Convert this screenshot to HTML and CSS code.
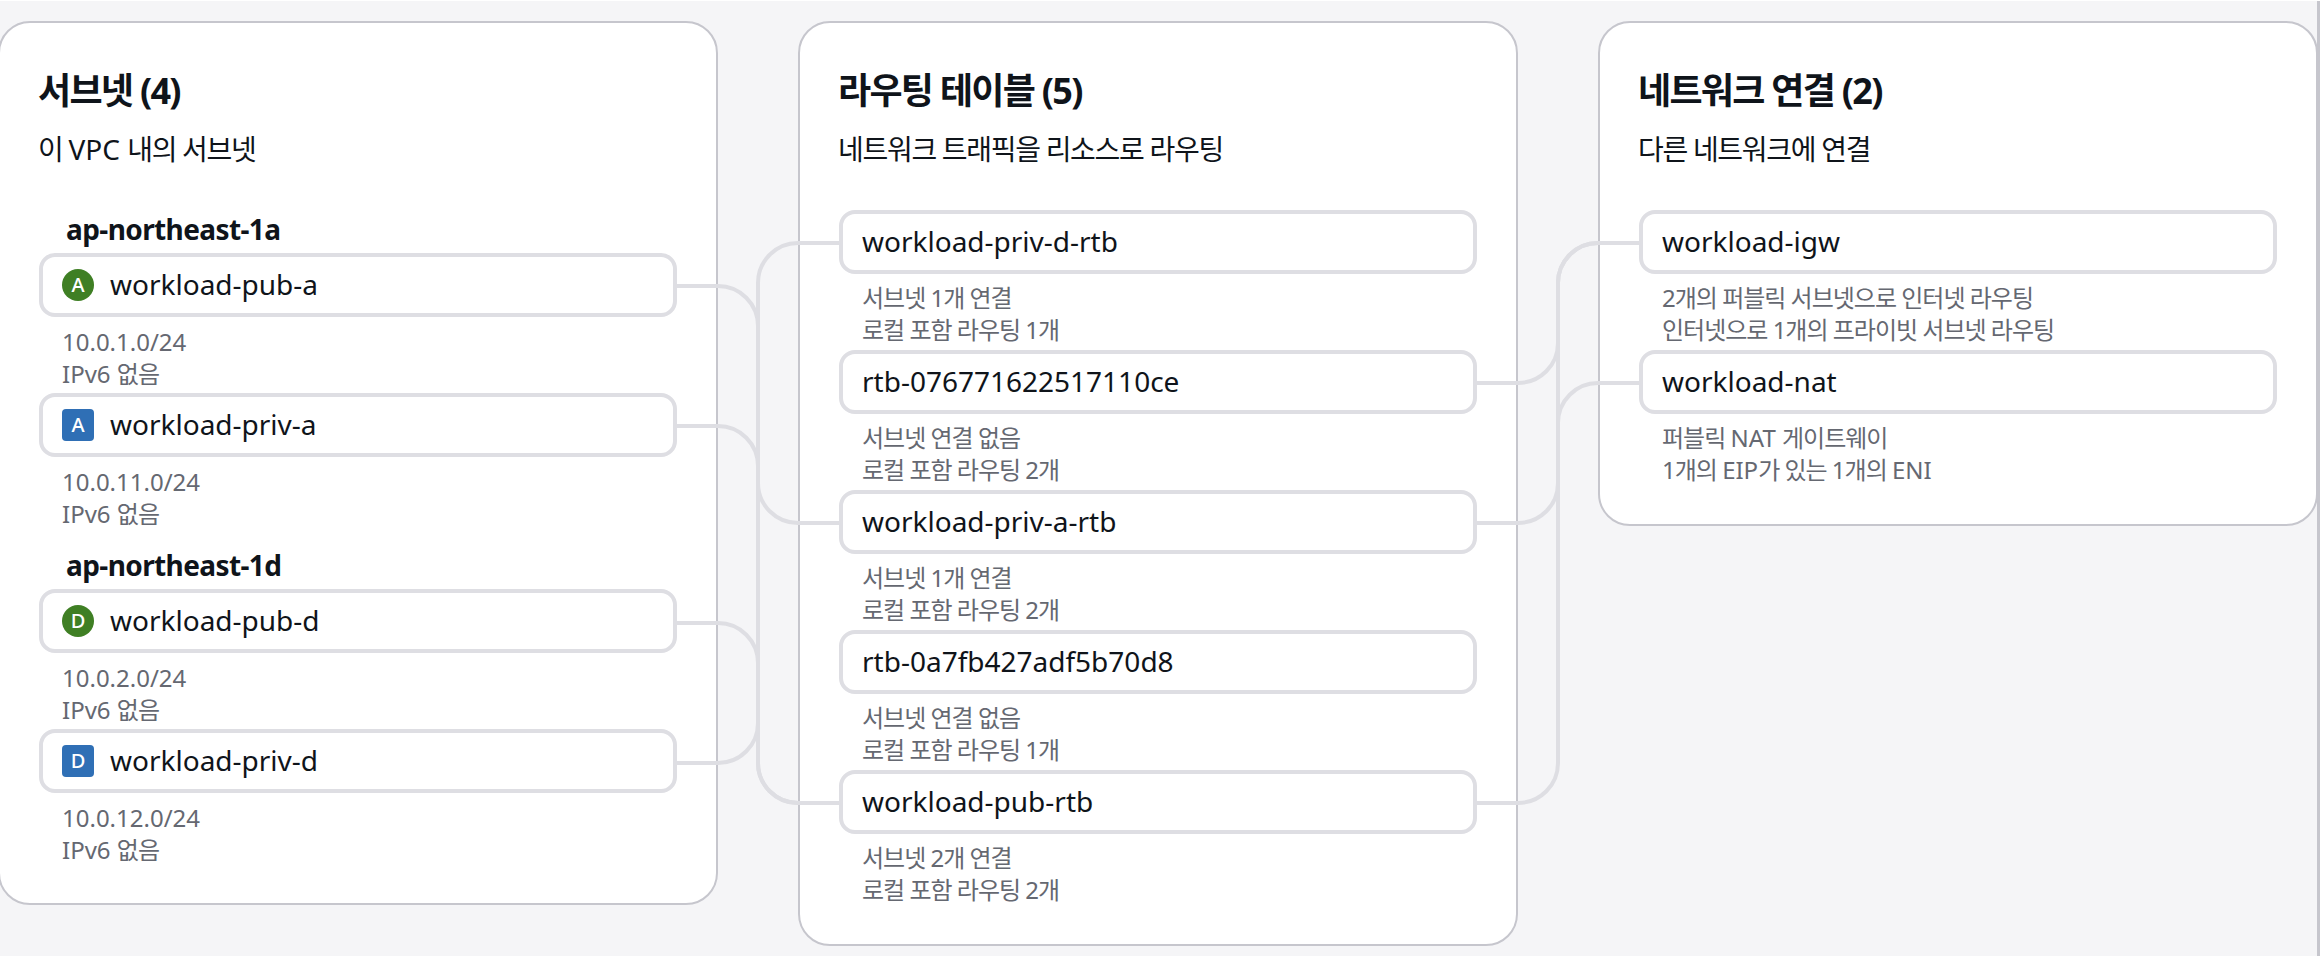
FILE: index.html
```html
<!DOCTYPE html>
<html lang="ko">
<head>
<meta charset="utf-8">
<title>VPC 리소스 맵</title>
<link rel="stylesheet" href="styles.css">
</head>
<body>
<main class="board">
  <div class="columns">
    <section class="card">
      <h2 class="title">서브넷 (4)</h2>
      <p class="sub"><span class="ko">이 </span>VPC <span class="ko">내의 서브넷</span></p>
      <div class="list">
        <h3 class="zone">ap-northeast-1a</h3>
        <div class="node"><span class="badge badge-pub">A</span><span>workload-pub-a</span></div>
        <div class="meta">10.0.1.0/24<br>IPv6 <span class="ko">없음</span></div>
        <div class="node"><span class="badge badge-priv">A</span><span>workload-priv-a</span></div>
        <div class="meta">10.0.11.0/24<br>IPv6 <span class="ko">없음</span></div>
        <h3 class="zone zone-next">ap-northeast-1d</h3>
        <div class="node"><span class="badge badge-pub">D</span><span>workload-pub-d</span></div>
        <div class="meta">10.0.2.0/24<br>IPv6 <span class="ko">없음</span></div>
        <div class="node"><span class="badge badge-priv">D</span><span>workload-priv-d</span></div>
        <div class="meta">10.0.12.0/24<br>IPv6 <span class="ko">없음</span></div>
      </div>
    </section>
    <section class="card">
      <h2 class="title">라우팅 테이블 (5)</h2>
      <p class="sub"><span class="ko">네트워크 트래픽을 리소스로 라우팅</span></p>
      <div class="list">
        <div class="node"><span>workload-priv-d-rtb</span></div>
        <div class="meta meta-ko"><span class="ko">서브넷 1개 연결<br>로컬 포함 라우팅 1개</span></div>
        <div class="node"><span>rtb-076771622517110ce</span></div>
        <div class="meta meta-ko"><span class="ko">서브넷 연결 없음<br>로컬 포함 라우팅 2개</span></div>
        <div class="node"><span>workload-priv-a-rtb</span></div>
        <div class="meta meta-ko"><span class="ko">서브넷 1개 연결<br>로컬 포함 라우팅 2개</span></div>
        <div class="node"><span>rtb-0a7fb427adf5b70d8</span></div>
        <div class="meta meta-ko"><span class="ko">서브넷 연결 없음<br>로컬 포함 라우팅 1개</span></div>
        <div class="node"><span>workload-pub-rtb</span></div>
        <div class="meta meta-ko"><span class="ko">서브넷 2개 연결<br>로컬 포함 라우팅 2개</span></div>
      </div>
    </section>
    <section class="card">
      <h2 class="title">네트워크 연결 (2)</h2>
      <p class="sub"><span class="ko">다른 네트워크에 연결</span></p>
      <div class="list">
        <div class="node"><span>workload-igw</span></div>
        <div class="meta meta-ko"><span class="ko">2개의 퍼블릭 서브넷으로 인터넷 라우팅<br>인터넷으로 1개의 프라이빗 서브넷 라우팅</span></div>
        <div class="node"><span>workload-nat</span></div>
        <div class="meta meta-ko"><span class="ko">퍼블릭 </span>NAT <span class="ko">게이트웨이<br>1개의 </span>EIP<span class="ko">가 있는 1개의 </span>ENI</div>
      </div>
    </section>
  </div>
  <svg class="links" width="2322" height="956" viewBox="0 0 2322 956" aria-hidden="true">
    <path d="M677 286H718A40 40 0 0 1 758 326V763A40 40 0 0 0 798 803H839"/>
    <path d="M677 426H718A40 40 0 0 1 758 466V483A40 40 0 0 0 798 523H839"/>
    <path d="M677 623H718A40 40 0 0 1 758 663V763A40 40 0 0 0 798 803H839"/>
    <path d="M677 763H718A40 40 0 0 0 758 723V283A40 40 0 0 1 798 243H839"/>
    <path d="M1477 383H1518A40 40 0 0 0 1558 343V283A40 40 0 0 1 1598 243H1639"/>
    <path d="M1477 523H1518A40 40 0 0 0 1558 483V423A40 40 0 0 1 1598 383H1639"/>
    <path d="M1477 803H1518A40 40 0 0 0 1558 763V283A40 40 0 0 1 1598 243H1639"/>
  </svg>
</main>
</body>
</html>
```
FILE: styles.css
```css
* {
  box-sizing: border-box;
}

html,
body {
  margin: 0;
  height: 100%;
  overflow: hidden;
  background: #ffffff;
}

body {
  padding-top: 1px;
  font-family: "Noto Sans", "Noto Sans CJK KR", sans-serif;
  color: #0f141a;
}

.board {
  position: relative;
  width: 2320px;
  height: 955px;
  background: #f5f5f7;
  border-right: 3px solid #c6c6cd;
  overflow: hidden;
}

.columns {
  display: grid;
  grid-template-columns: repeat(3, 720px);
  column-gap: 80px;
  align-items: start;
  margin: 20px 0 0 -2px;
}

.card {
  background: #ffffff;
  border: 2px solid #c6c6cd;
  border-radius: 32px;
  padding: 44px 39px 34px;
}

.title {
  margin: 0 0 0 -1px;
  font-size: 36px;
  line-height: 48px;
  font-weight: 700;
  letter-spacing: -1.7px;
}

.sub {
  margin: 14px 0 0 -1px;
  font-size: 28px;
  line-height: 40px;
}

.sub .ko {
  letter-spacing: -1.3px;
}

.list {
  margin-top: 41px;
}

.zone {
  margin: 0 0 5px;
  padding-left: 27px;
  font-size: 28px;
  line-height: 38px;
  font-weight: 700;
  letter-spacing: -0.6px;
}

.zone-next {
  margin-top: 13px;
}

.node {
  display: flex;
  align-items: center;
  gap: 16px;
  height: 64px;
  padding: 0 19px 3px;
  border: 4px solid #dedee3;
  border-radius: 16px;
  background: #ffffff;
  font-size: 28px;
  line-height: 36px;
}

.badge {
  display: flex;
  align-items: center;
  justify-content: center;
  width: 32px;
  height: 32px;
  flex: none;
  margin-top: 3px;
  color: #ffffff;
  font-size: 20px;
  font-weight: 500;
  line-height: 1;
}

.badge-pub {
  background: #3f7f24;
  border-radius: 50%;
}

.badge-priv {
  background: #2f6fb5;
  border-radius: 4px;
}

.meta {
  height: 76px;
  padding: 9px 0 0 23px;
  font-size: 24px;
  line-height: 32px;
  color: #656871;
}

.meta-ko {
  padding-top: 8px;
}

.meta .ko {
  letter-spacing: -1px;
}

.links {
  position: absolute;
  top: -1px;
  left: 0;
  pointer-events: none;
}

.links path {
  fill: none;
  stroke: #dedee3;
  stroke-width: 4;
}
```
